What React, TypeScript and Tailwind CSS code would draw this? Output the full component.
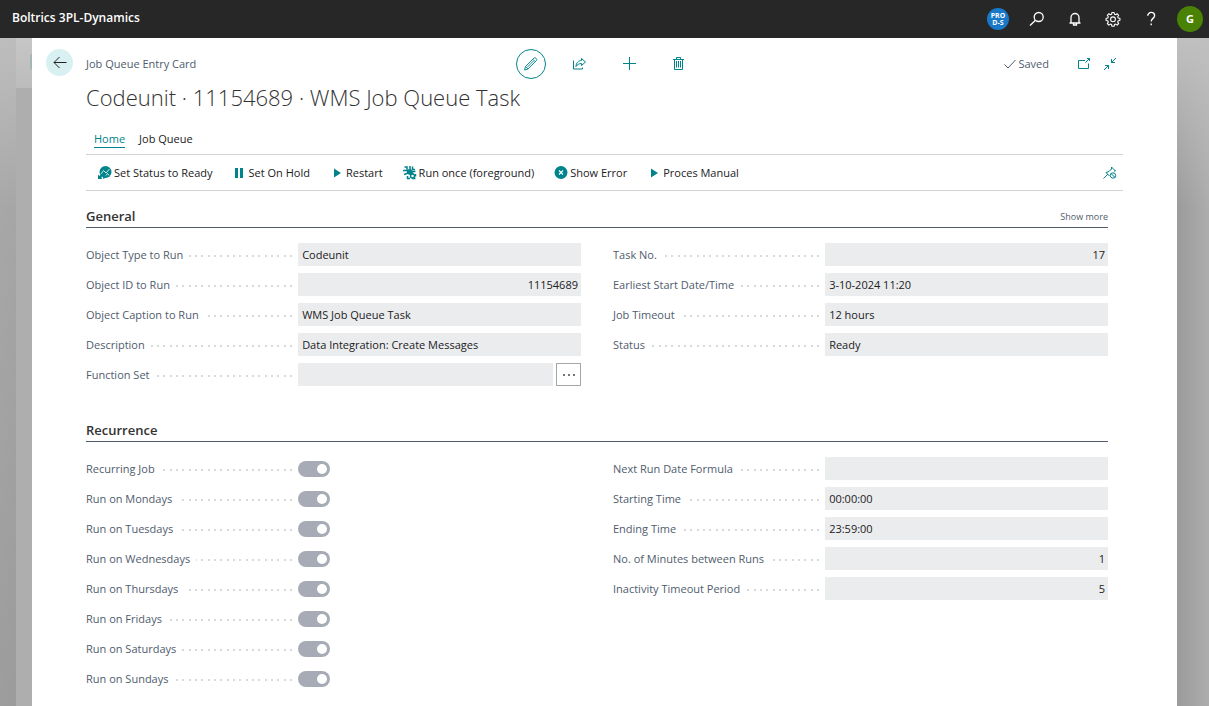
import React from "react";

interface FieldProps {
  label: string;
  value?: string;
  numeric?: boolean;
  lookup?: boolean;
}

const toId = (label: string) => label.toLowerCase().replace(/[^a-z0-9]+/g, "-");

function FieldLabel({ label }: { label: string }) {
  return (
    <div className="flex items-center pr-[6px] min-w-0">
      <label
        htmlFor={toId(label)}
        className="text-[11px] leading-4 text-[#505c6d] whitespace-nowrap"
      >
        {label}
      </label>
      <span className="ml-[6px] mt-[2px] h-[2px] flex-1 bg-[repeating-linear-gradient(to_left,#d8d9db_0_2px,transparent_2px_6px,#d8d9db_6px_8px,transparent_8px_13px,#d8d9db_13px_15px,transparent_15px_19px)]" />
    </div>
  );
}

function Field({ label, value = "", numeric, lookup }: FieldProps) {
  return (
    <div className="grid grid-cols-[3fr_4fr] h-[23px]">
      <FieldLabel label={label} />
      <div className="flex gap-[3px] min-w-0">
        <input
          id={toId(label)}
          type="text"
          readOnly
          value={value}
          className={`min-w-0 flex-1 h-full bg-[#ebecee] text-[11px] text-[#212121] outline-none ${
            numeric ? "text-right px-[3px]" : "px-1"
          }`}
        />
        {lookup && (
          <button
            type="button"
            aria-label={`Look up ${label}`}
            className="w-[25px] h-full border border-[#a6a6a6] bg-white flex items-center justify-center"
          >
            <svg viewBox="0 0 14 4" className="w-[14px] h-1" fill="#333">
              <circle cx="2" cy="2" r="0.9" />
              <circle cx="7" cy="2" r="0.9" />
              <circle cx="12" cy="2" r="0.9" />
            </svg>
          </button>
        )}
      </div>
    </div>
  );
}

function Toggle({ label }: { label: string }) {
  return (
    <div className="grid grid-cols-[3fr_4fr] h-[23px] items-center">
      <FieldLabel label={label} />
      <input
        id={toId(label)}
        type="checkbox"
        role="switch"
        defaultChecked
        disabled
        className="appearance-none flex items-center justify-end w-8 h-4 px-[3px] rounded-full bg-[#a6abb5] before:block before:size-[10px] before:rounded-full before:bg-white"
      />
    </div>
  );
}

function Section({
  title,
  action,
  children,
}: {
  title: string;
  action?: string;
  children: React.ReactNode;
}) {
  return (
    <section>
      <div className="h-[37px] flex items-end justify-between border-b border-[#505c6d] pb-[1px]">
        <h2 className="text-[13px] leading-5 font-semibold text-[#323232]">
          {title}
        </h2>
        {action && (
          <button type="button" className="text-[9px] leading-[18px] text-[#505c6d]">
            {action}
          </button>
        )}
      </div>
      <div className="grid grid-cols-2 gap-8 pt-[15px]">{children}</div>
    </section>
  );
}

const PlayIcon = () => (
  <svg viewBox="0 0 16 16" className="size-4" fill="#00838a">
    <path d="M4 3.500 11 8 4 12.500z" />
  </svg>
);

const PauseIcon = () => (
  <svg viewBox="0 0 16 16" className="size-4" fill="#00838a">
    <path d="M2 3h3v10H2zM7 3h3v10H7z" />
  </svg>
);

const StatusIcon = () => (
  <svg viewBox="0 0 16 16" className="size-4" fill="none">
    <circle cx="7.500" cy="7" r="6" fill="#00838a" />
    <path d="M3 9 5.500 5.500 8 8l3.500-4" stroke="#e5f3f4" strokeWidth="0.900" />
    <path d="M8 10.500 9.500 8.500l1.500 2" stroke="#e5f3f4" strokeWidth="0.900" />
    <path d="M0 7.500 7.500 14.500H0z" fill="#fff" />
    <path d="M0 9.500V14h4.500L3.200 12.700l2.300-2.300-1.800-1.800-2.300 2.300z" fill="#00838a" />
    <circle cx="5.800" cy="12.800" r="1" fill="#00838a" />
  </svg>
);

const RunOnceIcon = () => (
  <svg viewBox="0 0 16 16" className="size-4" fill="none" stroke="#00838a">
    <path
      d="M1.500 2H4v2.500M0 5.500h4.500M1 9.500l3-1M7 1v3.500M9.500 1.500v3H12M9 6.500h3.500"
      strokeWidth="1.500"
    />
    <path d="M3.500 4.500 8 4l2 3-2.500 3L4 9z" fill="#00838a" stroke="none" />
    <path d="M6 8.500h4.500M4.500 11v2.500H7M9.500 7.500v1.500M12.500 9v2.500M9 13.500h3.500" strokeWidth="1.500" />
    <circle cx="9.500" cy="11" r="2" strokeWidth="1.500" />
  </svg>
);

const ErrorIcon = () => (
  <svg viewBox="0 0 16 16" className="size-4" fill="none">
    <circle cx="7" cy="7.500" r="6.500" fill="#00838a" />
    <path d="m5 5.500 4 4M9 5.500l-4 4" stroke="#fff" strokeWidth="1.100" />
  </svg>
);

const actions = [
  { label: "Set Status to Ready", icon: <StatusIcon /> },
  { label: "Set On Hold", icon: <PauseIcon /> },
  { label: "Restart", icon: <PlayIcon /> },
  { label: "Run once (foreground)", icon: <RunOnceIcon /> },
  { label: "Show Error", icon: <ErrorIcon /> },
  { label: "Proces Manual", icon: <PlayIcon /> },
];

const toggles = [
  "Recurring Job",
  "Run on Mondays",
  "Run on Tuesdays",
  "Run on Wednesdays",
  "Run on Thursdays",
  "Run on Fridays",
  "Run on Saturdays",
  "Run on Sundays",
];

function Header() {
  const item = "w-[38px] h-full flex items-center justify-center";
  return (
    <header className="h-[38px] bg-[#272727] text-white flex items-center justify-between pl-3">
      <span className="text-[12px] font-semibold pb-[2px]">
        Boltrics 3PL-Dynamics
      </span>
      <div className="flex h-full">
        <button type="button" aria-label="Environment" className={item}>
          <span className="size-[22px] mr-1 rounded-full bg-[#1a78c8] text-[7px] leading-[7px] font-bold flex items-center justify-center text-center">
            PRO
            <br />
            D-S
          </span>
        </button>
        <button type="button" aria-label="Search" className={item}>
          <svg viewBox="0 0 16 16" className="size-4 mr-[2px]" fill="none" stroke="#fff" strokeWidth="1.300">
            <circle cx="9.700" cy="6" r="4.500" />
            <path d="M6.500 9.300 1 14.500" />
          </svg>
        </button>
        <button type="button" aria-label="Notifications" className={item}>
          <svg viewBox="0 0 16 16" className="size-4 mr-[2px]" fill="none" stroke="#fff" strokeWidth="1.300">
            <path d="M4 11.800V6.500a4 4 0 0 1 8 0v5.300M2.500 12h11M6.500 12.500v1.500h3v-1.500" />
          </svg>
        </button>
        <button type="button" aria-label="Settings" className={item}>
          <svg viewBox="0 0 16 16" className="size-4 mr-[2px]" fill="none" stroke="#fff" strokeWidth="1.100">
            <path
              d="M6.900 1.500h2.200l.3 1.700 1.300.5 1.400-1 1.600 1.600-1 1.400.5 1.300 1.700.3v2.200l-1.700.3-.5 1.300 1 1.400-1.600 1.600-1.400-1-1.300.5-.3 1.700H6.900l-.3-1.700-1.300-.5-1.400 1-1.600-1.600 1-1.400-.5-1.300-1.700-.3V7.300l1.700-.3.5-1.300-1-1.400 1.600-1.600 1.400 1 1.300-.5z"
              strokeLinejoin="round"
            />
            <circle cx="8" cy="8.300" r="2.400" />
          </svg>
        </button>
        <button type="button" aria-label="Help" className={item}>
          <svg viewBox="0 0 16 16" className="size-4 mr-[2px]" fill="none" stroke="#fff" strokeWidth="1.400">
            <path d="M4.800 4.800a3.400 3.400 0 0 1 6.800 0c0 2.600-3.400 2.600-3.400 5.700M8.200 12.500v1.700" />
          </svg>
        </button>
        <button type="button" aria-label="Account" className={item}>
          <span className="size-[26px] rounded-full bg-[#498205] text-[11px] font-bold flex items-center justify-center">
            G
          </span>
        </button>
      </div>
    </header>
  );
}

function CardToolbar() {
  const btn = "size-[30px] flex items-center justify-center";
  return (
    <div className="grid grid-cols-[1fr_auto_1fr] items-center pt-[11px]">
      <div className="flex items-center gap-[13px] pl-[14px]">
        <button
          type="button"
          aria-label="Back"
          className="size-[27px] mb-[3px] rounded-full bg-[#d9f0f2] flex items-center justify-center"
        >
          <svg viewBox="0 0 14 14" className="size-[14px]" fill="none" stroke="#212121">
            <path d="M13.500 6.500H1M6.500 1 1 6.500 6.500 12" />
          </svg>
        </button>
        <span className="text-[11px] text-[#505c6d]">Job Queue Entry Card</span>
      </div>
      <div className="flex gap-[19px]">
        <button type="button" aria-label="Edit" className={`${btn} rounded-full border border-[#00838a]`}>
          <svg viewBox="0 0 16 16" className="size-4" fill="none" stroke="#00838a" strokeWidth="0.900">
            <path d="M1.500 14 2.500 10.500 10.800 2.200a1.600 1.600 0 0 1 2.200 0l.3.300a1.600 1.600 0 0 1 0 2.200L5 13zM2.500 10.500 5 13M9.800 3.200l2.500 2.500M4.200 11.300l6.600-6.600" />
          </svg>
        </button>
        <button type="button" aria-label="Share" className={btn}>
          <svg viewBox="0 0 16 16" className="size-4" fill="none" stroke="#00838a">
            <path d="M1.500 4.500v8.500h9V11.500" />
            <path d="M9.500 2.500 13.500 6l-4 3.500V7.500C7 7.500 5.500 8.500 4 10.500c0-3.500 2.500-6 5.500-6z" />
          </svg>
        </button>
        <button type="button" aria-label="New" className={btn}>
          <svg viewBox="0 0 16 16" className="size-4" fill="none" stroke="#00838a">
            <path d="M8.500 1v13M2 7.500h13" />
          </svg>
        </button>
        <button type="button" aria-label="Delete" className={btn}>
          <svg viewBox="0 0 16 16" className="size-4" fill="none" stroke="#00838a">
            <path d="M4.500 3.500v10h8V3.500M3 3.500h11M6.500 3.500V1.500h4v2M6.500 5v6.500M8.500 5v6.500M10.500 5v6.500" />
          </svg>
        </button>
      </div>
      <div className="flex items-center justify-end pr-[60px]">
        <svg viewBox="0 0 12 12" className="size-3 mr-[2px]" fill="none" stroke="#505c6d">
          <path d="M.5 6.500 4 10l7.500-8" />
        </svg>
        <span className="text-[11px] text-[#505c6d]">Saved</span>
        <button type="button" aria-label="Open in new window" className="ml-[28px]">
          <svg viewBox="0 0 14 14" className="size-[14px] block" fill="none" stroke="#00838a">
            <path d="M8 3.500H1.500v8h10V6.500M8.500 5.500l4-4M10 1.500h2.500v2.500" />
          </svg>
        </button>
        <button type="button" aria-label="Collapse" className="ml-3">
          <svg viewBox="0 0 14 14" className="size-[14px] block" fill="none" stroke="#00838a">
            <path d="M13 1 8.500 5.500M8.500 2v3.500H12M1 13l4.500-4.500M2 8.500h3.500V12" />
          </svg>
        </button>
      </div>
    </div>
  );
}

export default function App() {
  return (
    <div className="min-h-screen flex flex-col font-['Open_Sans','Noto_Sans',sans-serif]">
      <Header />
      <div className="flex-1 flex">
        <div className="w-4 bg-[linear-gradient(100deg,#ababab,#9b9b9b)]">
          <div className="h-[170px] bg-linear-to-b from-[#bdbdbd] to-transparent" />
        </div>
        <div className="w-4 bg-[#aeaeae]">
          <div className="h-[50px] pt-4 bg-linear-to-b from-[#c6c6c6] to-[#bcbcbc] flex justify-end items-start">
            <div className="w-[2px] h-[16px] bg-[#a5b5b5] rounded-l-full" />
          </div>
        </div>
        <main className="flex-1 min-w-0 bg-white">
          <CardToolbar />
          <div className="px-[54px]">
            <h1 className="text-[22px] leading-9 font-light text-[#323232]">
              Codeunit · 11154689 · WMS Job Queue Task
            </h1>
            <nav className="flex gap-[14px] pl-2 pt-4 pb-[7px] text-[11px] leading-4">
              <a href="#home" className="text-[#00838a] shadow-[0_1px_0_#00838a]">
                Home
              </a>
              <a href="#job-queue" className="text-[#212121]">
                Job Queue
              </a>
            </nav>
            <div className="h-[37px] flex items-center border-y border-[#d0d2d6] pl-3 pr-[6px]">
              <div className="flex gap-5">
                {actions.map((action) => (
                  <button
                    key={action.label}
                    type="button"
                    className="flex items-center text-[11px] leading-4 text-[#212121] whitespace-nowrap"
                  >
                    {action.icon}
                    {action.label}
                  </button>
                ))}
              </div>
              <button type="button" aria-label="Unpin" className="ml-auto">
                <svg viewBox="0 0 14 14" className="size-[14px] block" fill="none" stroke="#00838a">
                  <path d="M.5 12.500 5 8M6.500 10 3 6.500 6 5.500 8.500 3V1l4 4h-1.500" />
                  <circle cx="10" cy="9.500" r="2.700" />
                  <path d="m8 7.500 4 4" />
                </svg>
              </button>
            </div>
            <div className="mr-[15px] flex flex-col gap-[19px]">
              <Section title="General" action="Show more">
                <div className="flex flex-col gap-[7px]">
                  <Field label="Object Type to Run" value="Codeunit" />
                  <Field label="Object ID to Run" value="11154689" numeric />
                  <Field label="Object Caption to Run" value="WMS Job Queue Task" />
                  <Field label="Description" value="Data Integration: Create Messages" />
                  <Field label="Function Set" lookup />
                </div>
                <div className="flex flex-col gap-[7px]">
                  <Field label="Task No." value="17" numeric />
                  <Field label="Earliest Start Date/Time" value="3-10-2024 11:20" />
                  <Field label="Job Timeout" value="12 hours" />
                  <Field label="Status" value="Ready" />
                </div>
              </Section>
              <Section title="Recurrence">
                <div className="flex flex-col gap-[7px]">
                  {toggles.map((label) => (
                    <Toggle key={label} label={label} />
                  ))}
                </div>
                <div className="flex flex-col gap-[7px]">
                  <Field label="Next Run Date Formula" />
                  <Field label="Starting Time" value="00:00:00" />
                  <Field label="Ending Time" value="23:59:00" />
                  <Field label="No. of Minutes between Runs" value="1" numeric />
                  <Field label="Inactivity Timeout Period" value="5" numeric />
                </div>
              </Section>
            </div>
          </div>
        </main>
        <div className="w-8 bg-linear-to-r from-[#9b9b9b] to-[#adadad]">
          <div className="h-[170px] bg-linear-to-b from-[#c0c0c0] to-transparent" />
        </div>
      </div>
    </div>
  );
}
